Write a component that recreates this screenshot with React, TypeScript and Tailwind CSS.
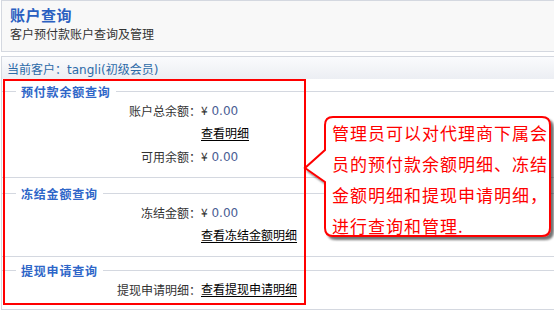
import React from "react";

const FONT = { fontFamily: '"DejaVu Sans", "Noto Sans CJK SC", sans-serif' };
const CJK = { fontFamily: '"Noto Sans CJK SC", sans-serif' };

function Legend({ title }: { title: string }) {
  return (
    <div className="flex items-center h-[15px]">
      <div className="w-[14px] h-px bg-[#d4d8e0]" />
      <span
        className="px-[5px] text-[12px] leading-[15px] font-bold tracking-[0.8px] text-[#2e66c8]"
        style={CJK}
      >
        {title}
      </span>
      <div className="flex-1 h-px bg-[#d4d8e0]" />
    </div>
  );
}

function Row({ label, children }: { label?: string; children: React.ReactNode }) {
  return (
    <div className="grid grid-cols-[199px_1fr] h-[23px] items-center text-[12px] leading-[16px]">
      <div className="text-right text-[#333]" style={CJK}>
        {label}
      </div>
      <div className="whitespace-nowrap">{children}</div>
    </div>
  );
}

function Money() {
  return (
    <span className="text-[12px]">
      <span className="text-[#333]" style={CJK}>¥</span>
      <span className="text-[#4a5d93]"> 0.00</span>
    </span>
  );
}

function Link({ text }: { text: string }) {
  return (
    <span className="text-black underline underline-offset-2" style={CJK}>
      {text}
    </span>
  );
}

export default function App() {
  return (
    <div className="relative w-[554px] h-[336px] bg-white overflow-hidden" style={FONT}>
      {/* header */}
      <div className="ml-px h-[52px] border-t border-l border-b border-[#d4d8e0] bg-[#f8f8f8] pl-[8px] pt-[5px]">
        <div className="text-[15px] leading-[18px] font-bold tracking-[0.5px] text-[#2a5fc1]" style={CJK}>
          账户查询
        </div>
        <div className="mt-[2px] text-[12px] leading-[16px] text-[#333]" style={CJK}>
          客户预付款账户查询及管理
        </div>
      </div>

      {/* customer bar */}
      <div className="ml-px mt-[4px] h-[23px] border-t border-l border-[#d4d8e0] bg-gradient-to-b from-[#fafbfd] to-[#eceef3] pl-[5px] pt-[4px]">
        <div className="text-[12px] leading-[16px] text-[#2c6aa8]">
          <span style={CJK}>当前客户：</span>tangli(<span style={CJK}>初级会员</span>)
        </div>
      </div>

      {/* content */}
      <div className="ml-px border-l border-b border-[#d4d8e0]">
        <div className="pt-[5px] pb-[9px] border-b border-[#d4d8e0]">
          <Legend title="预付款余额查询" />
          <Row label="账户总余额：">
            <Money />
          </Row>
          <Row>
            <Link text="查看明细" />
          </Row>
          <Row label="可用余额：">
            <Money />
          </Row>
        </div>
        <div className="mt-[8px] pb-[9px] border-b border-[#d4d8e0]">
          <Legend title="冻结金额查询" />
          <Row label="冻结金额：">
            <Money />
          </Row>
          <Row>
            <Link text="查看冻结金额明细" />
          </Row>
        </div>
        <div className="mt-[6px] pb-[8px]">
          <Legend title="提现申请查询" />
          <Row label="提现申请明细：">
            <Link text="查看提现申请明细" />
          </Row>
        </div>
      </div>

      {/* red annotation box */}
      <div className="absolute left-[3px] top-[79px] w-[303px] h-[226px] border-2 border-[#ff0000]" />

      {/* callout */}
      <div className="absolute left-[300px] top-[108px] w-[254px] h-[136px]">
        <svg className="absolute inset-0" width="254" height="136" viewBox="0 0 254 136">
          <defs>
            <filter id="sh" x="-10%" y="-10%" width="130%" height="130%">
              <feDropShadow dx="3" dy="3" stdDeviation="1.3" floodColor="#000" floodOpacity="0.55" />
            </filter>
          </defs>
          <path
            d="M 33 9 H 242 Q 250 9 250 17 V 120 Q 250 128 242 128 H 33 Q 25 128 25 120 V 74 L 5 60 L 25 42 V 17 Q 25 9 33 9 Z"
            fill="#fff"
            stroke="#ff0000"
            strokeWidth="2"
            filter="url(#sh)"
          />
        </svg>
        <div
          className="absolute left-[32px] top-[9px] text-[17px] leading-[31px] tracking-[1px] text-[#ff0000] whitespace-nowrap"
          style={CJK}
        >
          <div>管理员可以对代理商下属会</div>
          <div>员的预付款余额明细、冻结</div>
          <div>金额明细和提现申请明细，</div>
          <div>进行查询和管理.</div>
        </div>
      </div>
    </div>
  );
}
